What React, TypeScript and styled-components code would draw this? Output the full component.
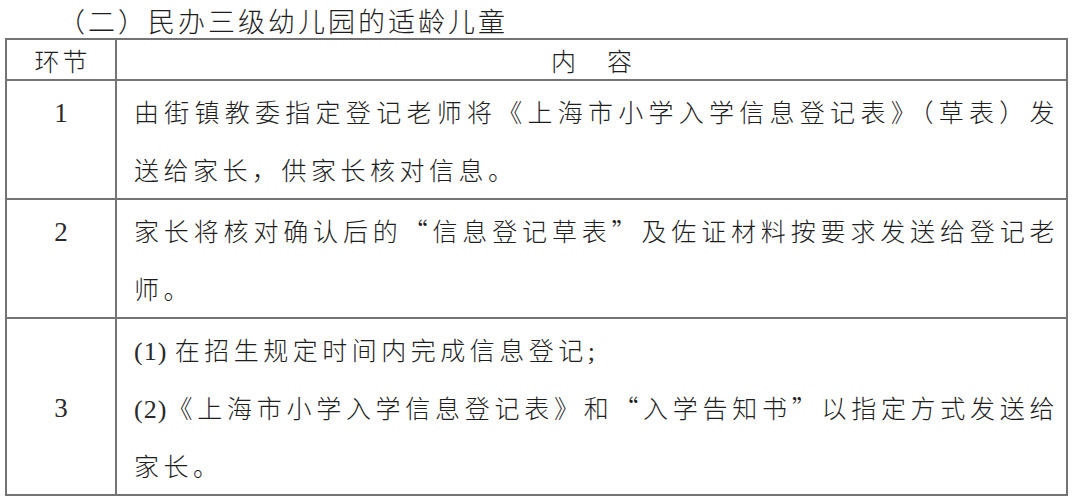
import React from 'react'
import styled, { createGlobalStyle } from 'styled-components'

const GlobalStyle = createGlobalStyle`
  html, body {
    margin: 0;
    padding: 0;
    background: #fff;
  }
  body {
    font-family: "Noto Sans CJK SC", "Liberation Serif", serif;
    color: #222;
  }
`

type Line = { text: React.ReactNode; full?: boolean }
type Step = { no: string; middle?: boolean; lines: Line[] }

const Latin = styled.span`
  font-family: "Liberation Serif", "Times New Roman", serif;
  font-size: 26px;
  line-height: 1;
  letter-spacing: 1px;
  font-weight: 400;
  color: #2a2a2a;
`

const steps: Step[] = [
  {
    no: '1',
    lines: [
      { text: '由街镇教委指定登记老师将《上海市小学入学信息登记表》（草表）发', full: true },
      { text: '送给家长，供家长核对信息。' },
    ],
  },
  {
    no: '2',
    lines: [
      { text: '家长将核对确认后的“信息登记草表”及佐证材料按要求发送给登记老', full: true },
      { text: '师。' },
    ],
  },
  {
    no: '3',
    middle: true,
    lines: [
      { text: <><Latin>(1) </Latin>在招生规定时间内完成信息登记<Latin>;</Latin></> },
      { text: <><Latin>(2)</Latin>《上海市小学入学信息登记表》和“入学告知书”以指定方式发送给</>, full: true },
      { text: '家长。' },
    ],
  },
]

function App() {
  return (
    <>
      <GlobalStyle />
      <Page>
        <Title>（二）民办三级幼儿园的适龄儿童</Title>
        <Table>
          <HeadCell>环节</HeadCell>
          <HeadCell>内　容</HeadCell>
          {steps.map(step => (
            <React.Fragment key={step.no}>
              <NoCell $middle={step.middle}>{step.no}</NoCell>
              <TextCell>
                {step.lines.map((line, i) => (
                  <TextLine key={i} $full={line.full}>{line.text}</TextLine>
                ))}
              </TextCell>
            </React.Fragment>
          ))}
        </Table>
      </Page>
    </>
  )
}

export default App

const Page = styled.div`
  width: 1080px;
  height: 500px;
  overflow: hidden;
  background: #fff;
`

const Title = styled.div`
  padding: 3px 0 0 58px;
  height: 35px;
  line-height: 35px;
  font-size: 27px;
  font-weight: 300;
  letter-spacing: 3px;
  color: #1e1e1e;
  white-space: nowrap;
`

const Table = styled.div`
  margin-left: 5px;
  width: 1063px;
  box-sizing: border-box;
  display: grid;
  grid-template-columns: 110px 1fr;
  border-top: 2px solid #747474;
  border-left: 2px solid #747474;
`

const Cell = styled.div`
  box-sizing: border-box;
  border-right: 2px solid #747474;
  border-bottom: 2px solid #747474;
`

const HeadCell = styled(Cell)`
  height: 41px;
  display: flex;
  align-items: center;
  justify-content: center;
  padding-left: 3px;
  font-size: 25px;
  font-weight: 300;
  letter-spacing: 3px;
  color: #1e1e1e;
`

const NoCell = styled(Cell)<{ $middle?: boolean }>`
  display: flex;
  justify-content: center;
  align-items: ${p => (p.$middle ? 'center' : 'flex-start')};
  padding-top: 3px;
  font-family: "Liberation Serif", "Times New Roman", serif;
  font-size: 27px;
  line-height: 58px;
  color: #2a2a2a;
`

const TextCell = styled(Cell)`
  padding: 1px 7px 0 17px;
`

const TextLine = styled.div<{ $full?: boolean }>`
  height: 58px;
  font-size: 25px;
  font-weight: 300;
  line-height: 58px;
  letter-spacing: 4.5px;
  text-align: justify;
  text-align-last: ${p => (p.$full ? 'justify' : 'left')};
  text-justify: inter-character;
  color: #1e1e1e;
`
